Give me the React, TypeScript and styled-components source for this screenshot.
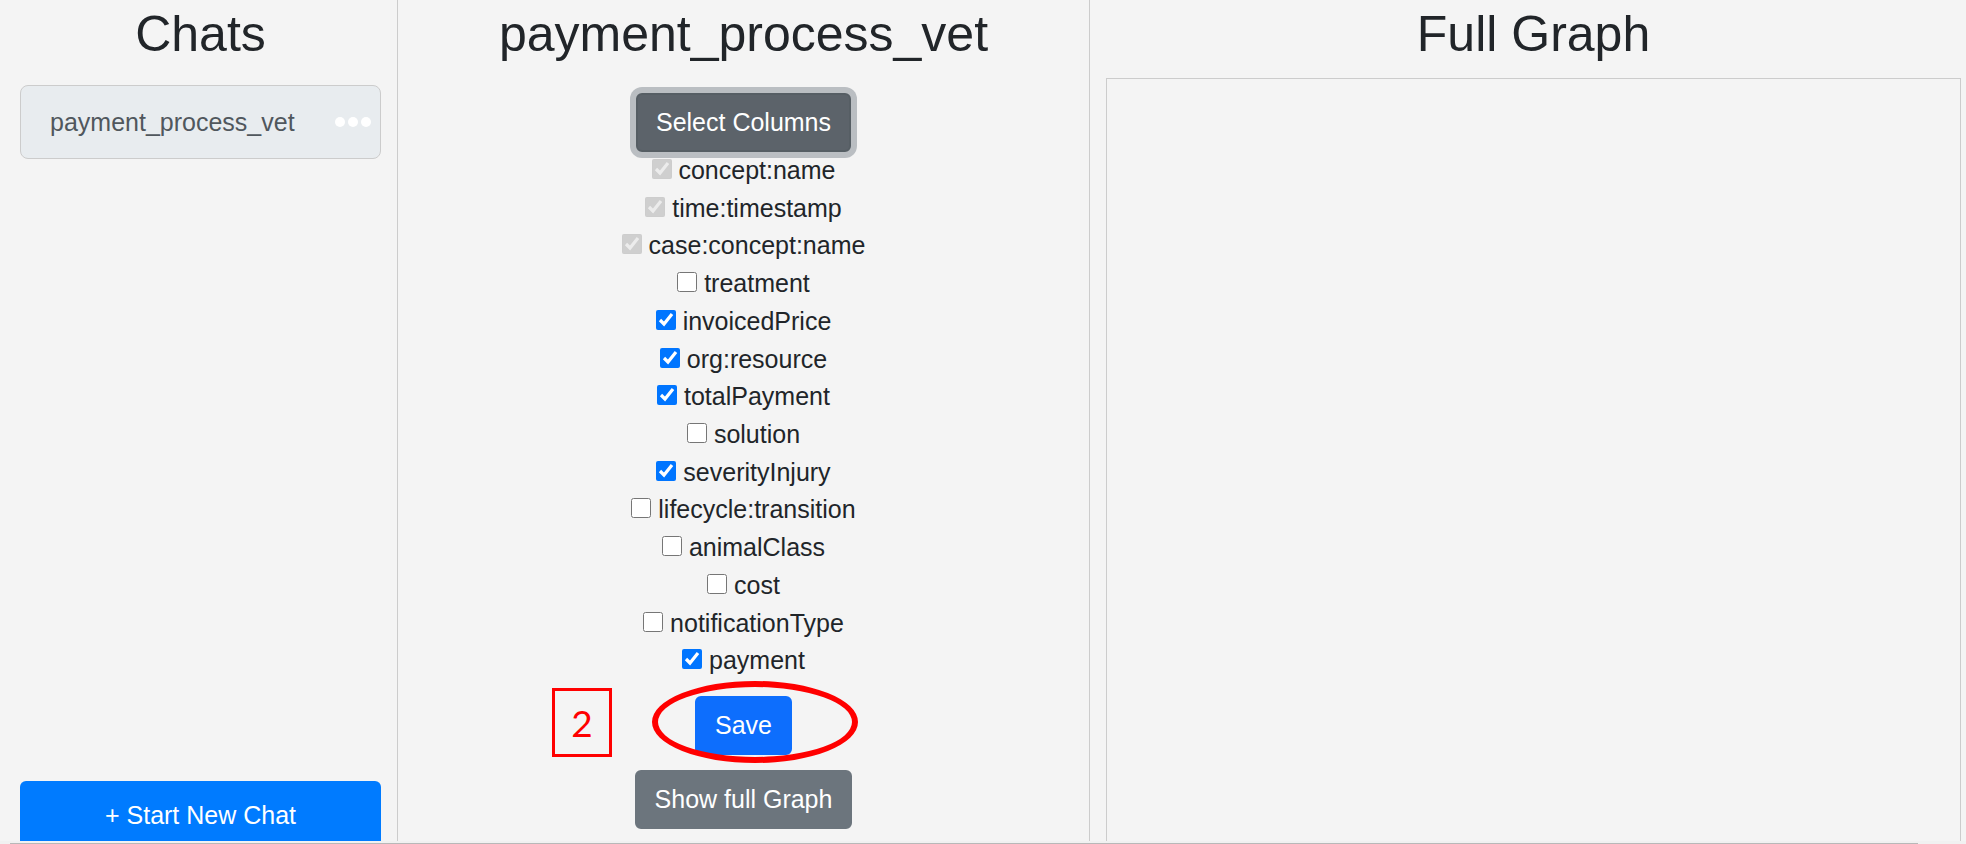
import React, { useState } from "react";
import styled, { createGlobalStyle, css } from "styled-components";

const GlobalStyle = createGlobalStyle`
  *, *::before, *::after { box-sizing: border-box; }
  body {
    margin: 0;
    background: #f4f4f4;
    color: #212529;
    font-family: "Liberation Sans", Arial, sans-serif;
    font-size: 25px;
    line-height: 37px;
  }
  button { font: inherit; cursor: pointer; }
`;

const Page = styled.div`
  display: flex;
  flex-direction: column;
  min-height: 100vh;
`;

const Columns = styled.div`
  flex: 1;
  display: grid;
  grid-template-columns: minmax(0, 398fr) minmax(0, 692fr) minmax(0, 876fr);
`;

const column = css`
  display: flex;
  flex-direction: column;
  padding-top: 4px;
`;

const Sidebar = styled.aside`
  ${column}
  padding-left: 20px;
  padding-right: 16px;
  border-right: 1px solid #cccccc;
`;

const Conversation = styled.main`
  ${column}
  align-items: center;
  padding-bottom: 12px;
  border-right: 1px solid #cccccc;
`;

const GraphPane = styled.section`
  ${column}
  padding-left: 16px;
  padding-right: 5px;
`;

const Title = styled.h1<{ $gap: number }>`
  margin: 0 0 ${(p) => p.$gap}px;
  font-size: 50px;
  font-weight: 400;
  line-height: 60px;
  text-align: center;
`;

const ChatItem = styled.div`
  display: flex;
  align-items: center;
  justify-content: space-between;
  height: 74px;
  padding: 0 8px 0 29px;
  background: #e8ecef;
  border: 1px solid #cccccc;
  border-radius: 8px;
`;

const ChatName = styled.button`
  padding: 0;
  border: 0;
  background: none;
  color: #50575d;
`;

const MenuButton = styled.button`
  display: flex;
  padding: 0;
  border: 0;
  background: none;
`;

const NewChatButton = styled.button`
  margin-top: auto;
  padding: 16px 20px 7px;
  border: 0;
  border-radius: 6px 6px 0 0;
  background: #007bff;
  color: #ffffff;
`;

const tones = {
  primary: { background: "#0d6efd", border: "#0d6efd" },
  secondary: { background: "#6c757d", border: "#6c757d" },
  pressed: { background: "#5c636a", border: "#565e64" },
};

const Button = styled.button<{ $tone: keyof typeof tones }>`
  padding: 9px 18px;
  border: 2px solid ${(p) => tones[p.$tone].border};
  border-radius: 6px;
  background: ${(p) => tones[p.$tone].background};
  color: #ffffff;
  ${(p) => p.$tone === "pressed" && "box-shadow: 0 0 0 6px #babec2;"}
`;

const ColumnList = styled.ul`
  flex: 1;
  display: grid;
  grid-auto-rows: minmax(37px, 1fr);
  margin: 0 0 16px;
  padding: 0;
  list-style: none;
  text-align: center;
`;

const Checkbox = styled.input`
  width: 20px;
  height: 20px;
  margin: 0;
`;

const SaveArea = styled.div`
  position: relative;
  margin-bottom: 15px;
`;

const StepNumber = styled.span`
  position: absolute;
  left: -143px;
  top: -8px;
  display: flex;
  align-items: center;
  justify-content: center;
  width: 60px;
  height: 69px;
  border: 3px solid #ff0000;
  color: #ff0000;
  font-family: Lato, Calibri, sans-serif;
  font-size: 37px;
`;

const Highlight = styled.span`
  position: absolute;
  left: -43px;
  top: -15px;
  width: 206px;
  height: 82px;
  border: 6px solid #ff0000;
  border-radius: 50%;
  pointer-events: none;
`;

const GraphCanvas = styled.div`
  flex: 1;
  border: 1px solid #cccccc;
  border-bottom: 0;
`;

const ScrollTrack = styled.div`
  height: 3px;
  padding: 2px 48px 0 10px;
  background: #f1f1f1;
`;

const ScrollThumb = styled.div`
  height: 1px;
  background: #b8b8b8;
`;

const initialColumns = [
  { name: "concept:name", checked: true, locked: true },
  { name: "time:timestamp", checked: true, locked: true },
  { name: "case:concept:name", checked: true, locked: true },
  { name: "treatment", checked: false },
  { name: "invoicedPrice", checked: true },
  { name: "org:resource", checked: true },
  { name: "totalPayment", checked: true },
  { name: "solution", checked: false },
  { name: "severityInjury", checked: true },
  { name: "lifecycle:transition", checked: false },
  { name: "animalClass", checked: false },
  { name: "cost", checked: false },
  { name: "notificationType", checked: false },
  { name: "payment", checked: true },
];

export default function App() {
  const [columns, setColumns] = useState(initialColumns);
  const toggle = (name: string) =>
    setColumns((all) =>
      all.map((c) => (c.name === name ? { ...c, checked: !c.checked } : c))
    );

  return (
    <Page>
      <GlobalStyle />
      <Columns>
        <Sidebar>
          <Title $gap={21}>Chats</Title>
          <ChatItem>
            <ChatName type="button">payment_process_vet</ChatName>
            <MenuButton type="button" aria-label="Chat options">
              <svg width="38" height="12" viewBox="0 0 38 12" fill="#ffffff">
                <circle cx="6" cy="6" r="5" />
                <circle cx="19" cy="6" r="5" />
                <circle cx="32" cy="6" r="5" />
              </svg>
            </MenuButton>
          </ChatItem>
          <NewChatButton type="button">+ Start New Chat</NewChatButton>
        </Sidebar>

        <Conversation>
          <Title $gap={29}>payment_process_vet</Title>
          <Button type="button" $tone="pressed">Select Columns</Button>
          <ColumnList>
            {columns.map((c) => (
              <li key={c.name}>
                <label>
                  <Checkbox
                    type="checkbox"
                    checked={c.checked}
                    disabled={c.locked}
                    onChange={() => toggle(c.name)}
                  />{" "}
                  {c.name}
                </label>
              </li>
            ))}
          </ColumnList>
          <SaveArea>
            <Button type="button" $tone="primary">Save</Button>
            <StepNumber>2</StepNumber>
            <Highlight />
          </SaveArea>
          <Button type="button" $tone="secondary">Show full Graph</Button>
        </Conversation>

        <GraphPane>
          <Title $gap={14}>Full Graph</Title>
          <GraphCanvas />
        </GraphPane>
      </Columns>
      <ScrollTrack>
        <ScrollThumb />
      </ScrollTrack>
    </Page>
  );
}
